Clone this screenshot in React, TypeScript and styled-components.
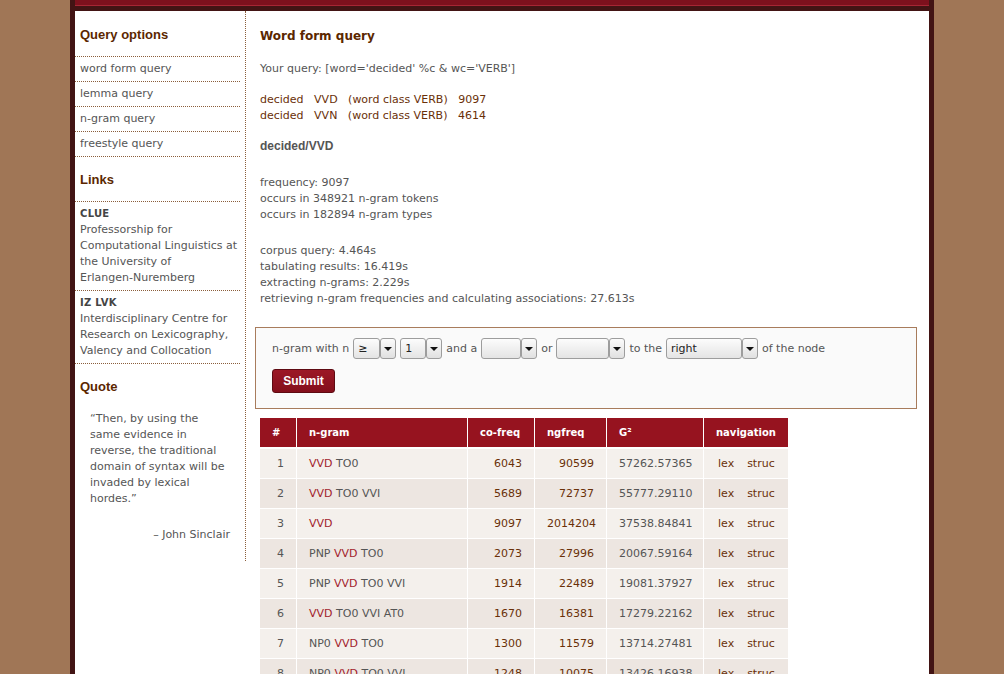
import React from 'react'
import styled, { createGlobalStyle } from 'styled-components'

const GlobalStyle = createGlobalStyle`
  * { box-sizing: border-box; }
  body {
    margin: 0;
    background: #a07656;
    font-family: "DejaVu Sans", Verdana, sans-serif;
    font-size: 11px;
    color: #555;
  }
`

const BROWN = '#5b2700'
const LINK = '#6a3008'
const DOTS = '#8b5e3c'

const Page = styled.div`
  width: 864px;
  margin: 0 auto;
  min-height: 100vh;
  background: #fff;
  border-left: 5px solid #421414;
  border-right: 5px solid #421414;
`

const Banner = styled.div`
  height: 11px;
  background: linear-gradient(#7d111d 0 5px, #a62634 5px 6px, #421414 6px 11px);
`

const Columns = styled.div`
  display: flex;
  align-items: flex-start;
`

const Sidebar = styled.aside`
  width: 171px;
  flex-shrink: 0;
  padding: 16px 5px 18px 0;
  border-right: 1px dotted ${DOTS};
`

const SideHeading = styled.h3<{ $first?: boolean; $after?: number }>`
  margin: ${p => (p.$first ? 0 : 15)}px 0 ${p => p.$after ?? 13}px;
  padding-left: 5px;
  font: bold 13px/16px "Liberation Sans", Arial, sans-serif;
  color: ${BROWN};
`

const Menu = styled.nav`
  border-top: 1px dotted ${DOTS};
`

const MenuItem = styled.a`
  display: block;
  height: 25px;
  line-height: 24px;
  padding-left: 5px;
  border-bottom: 1px dotted ${DOTS};
  color: #555;
  text-decoration: none;
`

const LinkEntry = styled.div`
  padding: 4px 0 4px 5px;
  line-height: 16px;
  border-bottom: 1px dotted ${DOTS};
`

const LinkTitle = styled.div`
  font-weight: bold;
  font-size: 10px;
  color: #444;
  letter-spacing: 0.3px;
`

const NoBreak = styled.span`
  white-space: nowrap;
`

const QuoteText = styled.blockquote`
  margin: 0;
  padding: 0 10px 0 15px;
  line-height: 16px;
`

const Attribution = styled.div`
  margin-top: 20px;
  padding-right: 10px;
  text-align: right;
  line-height: 16px;
`

const Main = styled.main`
  flex: 1;
  padding: 17px 12px 20px 14px;
`

const Title = styled.h1`
  margin: 0 0 17px;
  font: bold 12px/16px "DejaVu Sans", Verdana, sans-serif;
  color: ${BROWN};
`

const Block = styled.div<{ $gap?: number }>`
  margin-top: ${p => p.$gap ?? 0}px;
  line-height: 16px;
`

const Hit = styled.a`
  display: block;
  color: ${LINK};
  text-decoration: none;
  white-space: pre;
`

const SubTitle = styled.h2`
  margin: 14px 0 0;
  font: bold 12px/16px "Liberation Sans", Arial, sans-serif;
  color: #555;
`

const FormBox = styled.form`
  margin: 20px 0 0 -5px;
  padding: 10px 16px 15px;
  border: 1px solid #a87c5c;
  background: #fafafa;
`

const FormRow = styled.div`
  display: flex;
  align-items: center;
  gap: 4px;
  height: 21px;
`

const SelectWrap = styled.span<{ $w: number }>`
  display: inline-flex;
  width: ${p => p.$w}px;
  height: 21px;
`

const SelectField = styled.select`
  appearance: none;
  flex: 1;
  min-width: 0;
  height: 100%;
  padding: 0 4px;
  border: 1px solid #9d9d9d;
  border-radius: 3px;
  background: linear-gradient(#fcfcfc, #e4e4e4);
  font: 11px "DejaVu Sans", Verdana, sans-serif;
  color: #222;
  outline: none;
`

const SelectArrow = styled.span`
  display: flex;
  align-items: center;
  justify-content: center;
  width: 16px;
  height: 100%;
  border: 1px solid #9d9d9d;
  border-radius: 3px;
  background: linear-gradient(#fcfcfc, #e0e0e0);
  &::after {
    content: '';
    border-left: 4px solid transparent;
    border-right: 4px solid transparent;
    border-top: 4px solid #111;
  }
`

const SubmitButton = styled.button`
  display: block;
  margin-top: 10px;
  width: 63px;
  height: 24px;
  border: 1px solid #5e0a12;
  border-radius: 3px;
  background: linear-gradient(#9c1826, #840f1c);
  color: #fff;
  font: bold 12px "Liberation Sans", Arial, sans-serif;
  cursor: pointer;
`

const Table = styled.table`
  margin: 8px 0 0 -1px;
  width: 530px;
  table-layout: fixed;
  border-collapse: separate;
  border-spacing: 1px;
`

const Th = styled.th<{ $w: number }>`
  width: ${p => p.$w}px;
  height: 30px;
  padding: 0 12px;
  border-bottom: 1px solid #fff;
  background: #96131f;
  color: #fff;
  font-size: 10px;
  font-weight: bold;
  text-align: left;
`

const Td = styled.td<{ $odd: boolean; $align?: string; $color?: string }>`
  height: 29px;
  padding: 0 12px;
  background: ${p => (p.$odd ? '#f4f0ec' : '#ede6e1')};
  text-align: ${p => p.$align ?? 'left'};
  color: ${p => p.$color ?? '#555'};
  white-space: nowrap;
`

const NavCell = styled.span`
  display: flex;
  gap: 13px;
  padding-left: 2px;
`

const NavLink = styled.a`
  color: ${LINK};
  text-decoration: none;
`

const Node = styled.span`
  color: #a21c2c;
`

function Select({ w, value }: { w: number; value: string }) {
  return (
    <SelectWrap $w={w}>
      <SelectField defaultValue={value}>
        <option value={value}>{value}</option>
      </SelectField>
      <SelectArrow />
    </SelectWrap>
  )
}

const rows = [
  ['VVD TO0', '6043', '90599', '57262.57365'],
  ['VVD TO0 VVI', '5689', '72737', '55777.29110'],
  ['VVD', '9097', '2014204', '37538.84841'],
  ['PNP VVD TO0', '2073', '27996', '20067.59164'],
  ['PNP VVD TO0 VVI', '1914', '22489', '19081.37927'],
  ['VVD TO0 VVI AT0', '1670', '16381', '17279.22162'],
  ['NP0 VVD TO0', '1300', '11579', '13714.27481'],
  ['NP0 VVD TO0 VVI', '1248', '10075', '13426.16938'],
]

function Ngram({ text }: { text: string }) {
  const tokens = text.split(' ')
  return (
    <>
      {tokens.map((t, i) => (
        <React.Fragment key={i}>
          {i > 0 && ' '}
          {t === 'VVD' ? <Node>{t}</Node> : t}
        </React.Fragment>
      ))}
    </>
  )
}

export default function App() {
  return (
    <>
      <GlobalStyle />
      <Page>
        <Banner />
        <Columns>
          <Sidebar>
            <SideHeading $first>Query options</SideHeading>
            <Menu>
              <MenuItem href="#">word form query</MenuItem>
              <MenuItem href="#">lemma query</MenuItem>
              <MenuItem href="#">n-gram query</MenuItem>
              <MenuItem href="#">freestyle query</MenuItem>
            </Menu>

            <SideHeading>Links</SideHeading>
            <Menu>
              <LinkEntry>
                <LinkTitle>CLUE</LinkTitle>
                Professorship for Computational Linguistics at the University of{' '}
                <NoBreak>Erlangen-Nuremberg</NoBreak>
              </LinkEntry>
              <LinkEntry>
                <LinkTitle>IZ LVK</LinkTitle>
                Interdisciplinary Centre for Research on Lexicography, Valency and Collocation
              </LinkEntry>
            </Menu>

            <SideHeading $after={16}>Quote</SideHeading>
            <QuoteText>
              “Then, by using the same evidence in reverse, the traditional domain of syntax will be
              invaded by lexical hordes.”
            </QuoteText>
            <Attribution>– John Sinclair</Attribution>
          </Sidebar>

          <Main>
            <Title>Word form query</Title>
            <Block>Your query: [word='decided' %c &amp; wc='VERB']</Block>
            <Block $gap={15}>
              <Hit href="#">{'decided   VVD   (word class VERB)   9097'}</Hit>
              <Hit href="#">{'decided   VVN   (word class VERB)   4614'}</Hit>
            </Block>
            <SubTitle>decided/VVD</SubTitle>
            <Block $gap={21}>
              frequency: 9097
              <br />
              occurs in 348921 n-gram tokens
              <br />
              occurs in 182894 n-gram types
            </Block>
            <Block $gap={20}>
              corpus query: 4.464s
              <br />
              tabulating results: 16.419s
              <br />
              extracting n-grams: 2.229s
              <br />
              retrieving n-gram frequencies and calculating associations: 27.613s
            </Block>

            <FormBox onSubmit={e => e.preventDefault()}>
              <FormRow>
                <span>n-gram with n</span>
                <Select w={43} value="≥" />
                <Select w={42} value="1" />
                <span>and a</span>
                <Select w={56} value="" />
                <span>or</span>
                <Select w={69} value="" />
                <span>to the</span>
                <Select w={92} value="right" />
                <span>of the node</span>
              </FormRow>
              <SubmitButton type="submit">Submit</SubmitButton>
            </FormBox>

            <Table>
              <thead>
                <tr>
                  <Th $w={36}>#</Th>
                  <Th $w={170}>n-gram</Th>
                  <Th $w={66}>co-freq</Th>
                  <Th $w={71}>ngfreq</Th>
                  <Th $w={96}>G²</Th>
                  <Th $w={84}>navigation</Th>
                </tr>
              </thead>
              <tbody>
                {rows.map((r, i) => {
                  const odd = i % 2 === 0
                  return (
                    <tr key={i}>
                      <Td $odd={odd} $align="right">{i + 1}</Td>
                      <Td $odd={odd}>
                        <Ngram text={r[0]} />
                      </Td>
                      <Td $odd={odd} $align="right" $color={LINK}>{r[1]}</Td>
                      <Td $odd={odd} $align="right" $color={LINK}>{r[2]}</Td>
                      <Td $odd={odd}>{r[3]}</Td>
                      <Td $odd={odd}>
                        <NavCell>
                          <NavLink href="#">lex</NavLink>
                          <NavLink href="#">struc</NavLink>
                        </NavCell>
                      </Td>
                    </tr>
                  )
                })}
              </tbody>
            </Table>
          </Main>
        </Columns>
      </Page>
    </>
  )
}
